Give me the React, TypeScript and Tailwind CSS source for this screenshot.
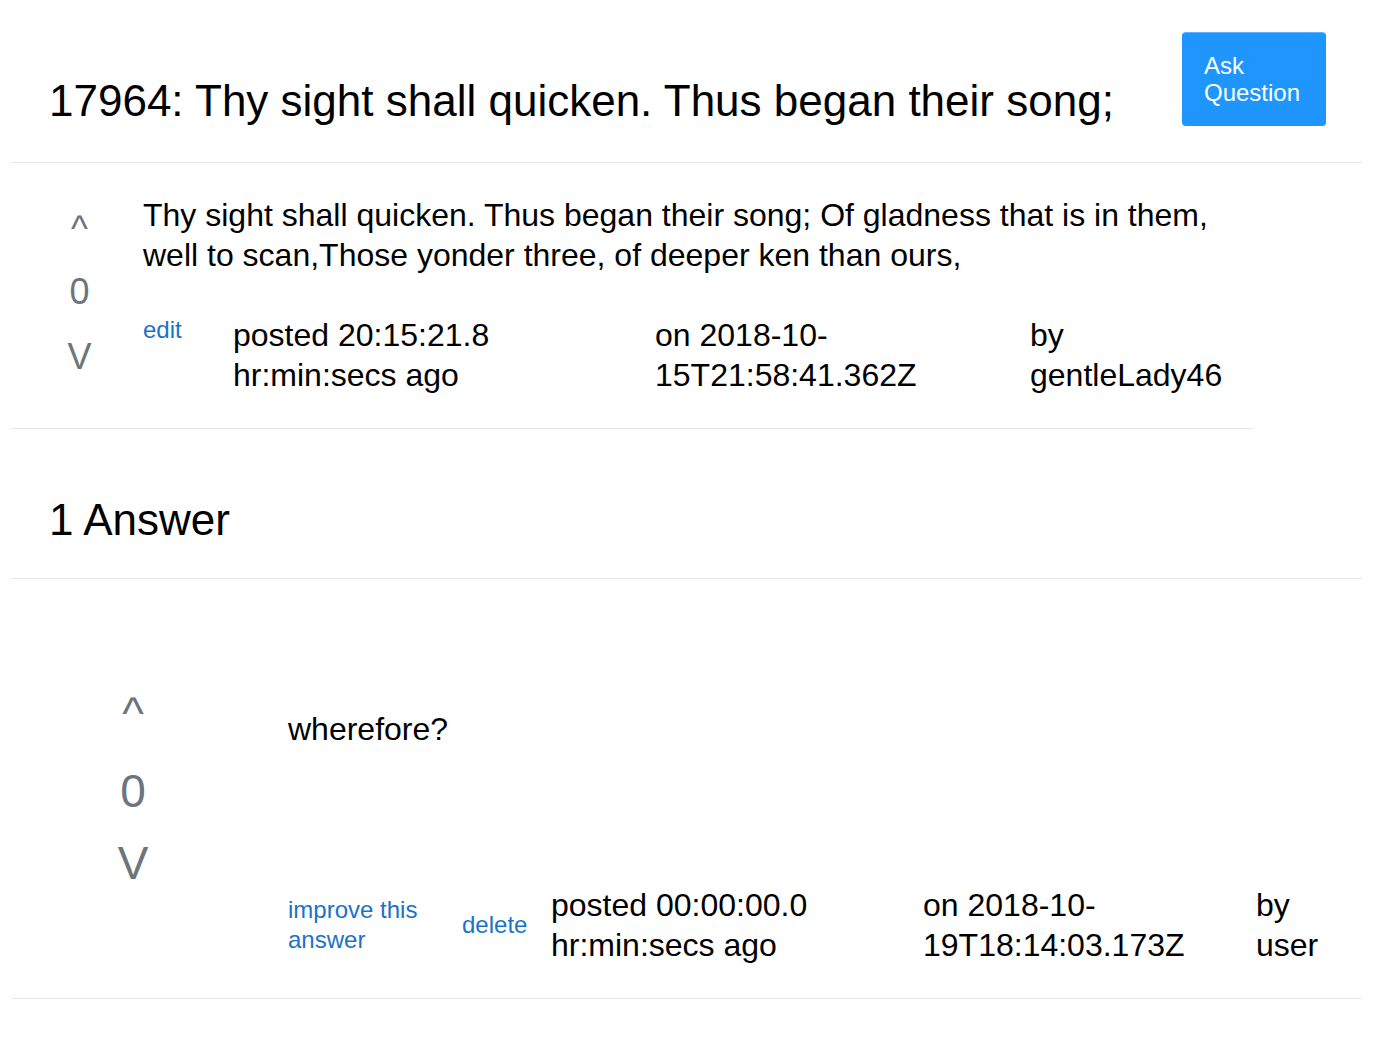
const FONT = "font-['Liberation_Sans',Arial,Helvetica,sans-serif]"

function VoteColumn({ size }: { size: 'sm' | 'lg' }) {
  if (size === 'sm') {
    return (
      <div className="flex w-[131px] shrink-0 flex-col items-center pl-[4px] pt-[48px] text-[36px] leading-none text-[#6c757d]">
        <div className="h-[36px]">^</div>
        <div className="mt-[27px] h-[36px]">0</div>
        <div className="mt-[29px] h-[36px]">V</div>
      </div>
    )
  }
  return (
    <div className="flex w-[242px] shrink-0 flex-col items-center pt-[111px] text-[46px] leading-none text-[#6c757d]">
      <div className="h-[46px]">^</div>
      <div className="mt-[32px] h-[46px]">0</div>
      <div className="mt-[26px] h-[46px]">V</div>
    </div>
  )
}

export default function App() {
  return (
    <div className={`${FONT} min-h-[1048px] bg-white text-black`}>
      <div className="ml-[12px] w-[1350px]">
        <header className="flex items-start justify-between border-b border-[#e6e6e6] pl-[37px] pr-[36px] pb-[35px]">
          <h1 className="mt-[74px] text-[44px] font-normal leading-[53px]">
            17964: Thy sight shall quicken. Thus began their song;
          </h1>
          <button
            type="button"
            className="mt-[32px] w-[144px] rounded-[4px] border border-[#1e96fe] border-t-[#5cb2ff] bg-[#1e96fe] py-[19px] pl-[21px] text-left text-[24px] leading-[27px] text-white"
          >
            Ask
            <br />
            Question
          </button>
        </header>

        <section className="flex w-[1241px] border-b border-[#e6e6e6]">
          <VoteColumn size="sm" />
          <div className="flex-1 pt-[32px] pb-[33px]">
            <p className="text-[32px] leading-[40px]">
              Thy sight shall quicken. Thus began their song; Of gladness that is in them, well to scan,Those yonder three, of deeper ken than ours,
            </p>
            <div className="mt-[40px] flex items-start text-[32px] leading-[40px]">
              <a className="w-[90px] shrink-0 text-[24px] leading-[30px] text-[#1b72c9]" href="#">
                edit
              </a>
              <div className="w-[422px] shrink-0">posted 20:15:21.8 hr:min:secs ago</div>
              <div className="w-[375px] shrink-0">on 2018-10-15T21:58:41.362Z</div>
              <div className="flex-1">by gentleLady46</div>
            </div>
          </div>
        </section>

        <div className="border-b border-[#e6e6e6] pl-[37px] pt-[64px] pb-[32px]">
          <h2 className="text-[44px] font-normal leading-[53px]">1 Answer</h2>
        </div>

        <section className="flex border-b border-[#e6e6e6]">
          <VoteColumn size="lg" />
          <div className="flex-1 pl-[34px] pr-[22px] pt-[130px] pb-[33px]">
            <p className="text-[32px] leading-[40px]">wherefore?</p>
            <div className="mt-[136px] flex items-center text-[32px] leading-[40px]">
              <a className="w-[174px] shrink-0 text-[24px] leading-[30px] text-[#1b72c9]" href="#">
                improve this answer
              </a>
              <a className="w-[89px] shrink-0 text-[24px] leading-[30px] text-[#1b72c9]" href="#">
                delete
              </a>
              <div className="w-[372px] shrink-0">posted 00:00:00.0 hr:min:secs ago</div>
              <div className="w-[333px] shrink-0">on 2018-10-19T18:14:03.173Z</div>
              <div className="flex-1">by user</div>
            </div>
          </div>
        </section>
      </div>
    </div>
  )
}
